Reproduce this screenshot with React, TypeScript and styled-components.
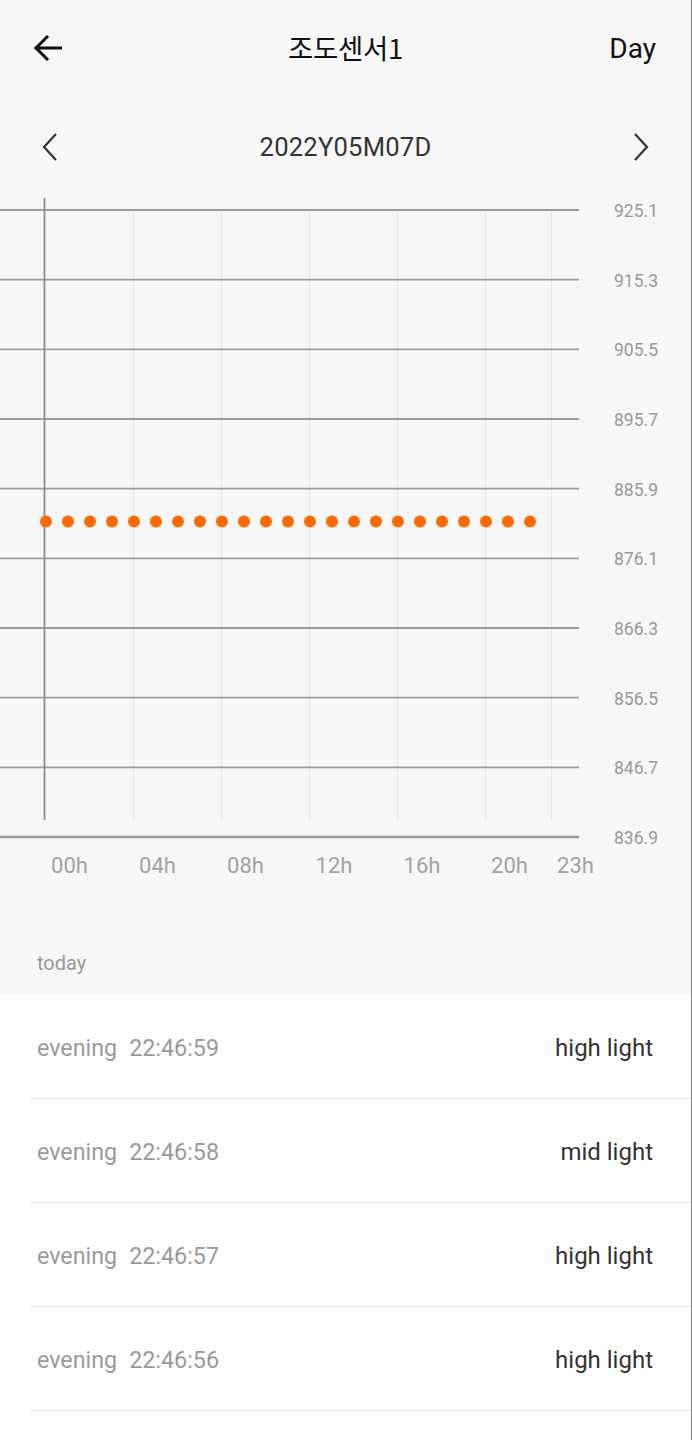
import React from "react";
import styled, { createGlobalStyle } from "styled-components";

const GlobalStyle = createGlobalStyle`
  html, body {
    margin: 0;
    padding: 0;
    background: #f7f7f7;
  }
  * { box-sizing: border-box; }
  body {
    font-family: Roboto, "Noto Sans CJK KR", "Noto Sans", sans-serif;
  }
`;

const Page = styled.div`
  width: 692px;
  min-height: 1440px;
  background: #ffffff;
  border-right: 1px solid #7a7a7a;
  display: flex;
  flex-direction: column;
`;

const Top = styled.div`
  background: #f7f7f7;
  display: flex;
  flex-direction: column;
`;

const Header = styled.header`
  height: 96px;
  display: grid;
  grid-template-columns: 1fr auto 1fr;
  align-items: center;
  padding: 0 34px 0 34px;
`;

const IconButton = styled.button<{ $align?: "start" | "end" }>`
  border: 0;
  background: transparent;
  padding: 0;
  display: flex;
  align-items: center;
  justify-self: ${(p) => (p.$align === "end" ? "end" : "start")};
  color: #222;
  cursor: pointer;
`;

const Title = styled.h1`
  margin: 0 0 2px;
  font-size: 27.5px;
  font-weight: 400;
  color: #111;
  font-family: "Noto Sans CJK KR", Roboto, sans-serif;
  letter-spacing: -0.3px;
`;

const RangeLabel = styled.span`
  justify-self: end;
  font-size: 28px;
  color: #111;
  margin-right: 1px;
`;

const DateBar = styled.div`
  height: 102px;
  display: grid;
  grid-template-columns: 1fr auto 1fr;
  align-items: center;
  padding: 0 42px 0 42px;
`;

const DateText = styled.span`
  font-size: 25.6px;
  color: #333;
  letter-spacing: 0.2px;
`;

const ChartWrap = styled.div`
  height: 712px;
  display: block;
`;

const SectionHead = styled.div`
  padding: 42px 37px 21px;
  font-size: 20px;
  line-height: 22px;
  color: #999;
`;

const List = styled.ul`
  list-style: none;
  margin: 0;
  padding: 0;
  background: #fff;
`;

const Row = styled.li`
  height: 104px;
  margin-left: 30px;
  padding: 0 38px 0 7px;
  display: flex;
  align-items: center;
  justify-content: space-between;
  border-bottom: 1px solid #e3e3e3;
  padding-top: 3px;
`;

const When = styled.span`
  font-size: 23.3px;
  color: #9a9a9a;
  display: flex;
  gap: 12px;
`;

const Level = styled.span`
  font-size: 24px;
  color: #333;
`;

const BackArrow = () => (
  <svg width="28" height="26" viewBox="0 0 28 26" fill="none">
    <path d="M2 13 H27 M13 2 L2 13 L13 24" stroke="#111" strokeWidth="3" strokeLinecap="square" strokeLinejoin="miter" />
  </svg>
);

const Chevron = ({ dir }: { dir: "left" | "right" }) => (
  <svg width="16" height="28" viewBox="0 0 16 28" fill="none">
    {dir === "left" ? (
      <path d="M14 1 L2 14 L14 27" stroke="#333" strokeWidth="2.2" />
    ) : (
      <path d="M2 1 L14 14 L2 27" stroke="#333" strokeWidth="2.2" />
    )}
  </svg>
);

const yValues = ["925.1", "915.3", "905.5", "895.7", "885.9", "876.1", "866.3", "856.5", "846.7", "836.9"];
const xVerticals = [133, 221, 309, 397, 485, 551];
const xLabels: [string, number][] = [
  ["00h", 69.5],
  ["04h", 157.5],
  ["08h", 245.5],
  ["12h", 334],
  ["16h", 422],
  ["20h", 509.5],
  ["23h", 575.5],
];

const Chart = () => {
  const step = 627 / 9;
  return (
    <svg width="692" height="712" viewBox="0 0 692 712" style={{ display: "block" }}>
      {xVerticals.map((x) => (
        <line key={x} x1={x + 0.5} x2={x + 0.5} y1={12} y2={622} stroke="#e6e6e6" strokeWidth="1" />
      ))}
      {yValues.map((v, i) => {
        const y = 12 + i * step;
        return (
          <g key={v}>
            <line x1={0} x2={579} y1={y} y2={y} stroke="#9c9c9c" strokeWidth={i === 9 ? 2.4 : 1.8} />
            <text
              x={658}
              y={y + 1}
              textAnchor="end"
              dominantBaseline="central"
              fontSize="17.5"
              fill="#9a9a9a"
              fontFamily="Roboto, sans-serif"
            >
              {v}
            </text>
          </g>
        );
      })}
      <line x1={44.5} x2={44.5} y1={0} y2={622} stroke="#8c8c8c" strokeWidth="1.8" />
      {Array.from({ length: 23 }, (_, i) => (
        <circle key={i} cx={46 + i * 22} cy={323.5} r={6} fill="#ff6a00" />
      ))}
      {xLabels.map(([t, x]) => (
        <text
          key={t}
          x={x}
          y={667}
          textAnchor="middle"
          dominantBaseline="central"
          fontSize="22"
          fill="#a3a3a3"
          fontFamily="Roboto, sans-serif"
        >
          {t}
        </text>
      ))}
    </svg>
  );
};

const records = [
  { time: "22:46:59", level: "high light" },
  { time: "22:46:58", level: "mid light" },
  { time: "22:46:57", level: "high light" },
  { time: "22:46:56", level: "high light" },
];

export default function App() {
  return (
    <>
      <GlobalStyle />
      <Page>
        <Top>
          <Header>
            <IconButton aria-label="back">
              <BackArrow />
            </IconButton>
            <Title>조도센서1</Title>
            <RangeLabel>Day</RangeLabel>
          </Header>
          <DateBar>
            <IconButton aria-label="previous day">
              <Chevron dir="left" />
            </IconButton>
            <DateText>2022Y05M07D</DateText>
            <IconButton aria-label="next day" $align="end">
              <Chevron dir="right" />
            </IconButton>
          </DateBar>
          <ChartWrap>
            <Chart />
          </ChartWrap>
          <SectionHead>today</SectionHead>
        </Top>
        <List>
          {records.map((r) => (
            <Row key={r.time}>
              <When>
                <span>evening</span>
                <span>{r.time}</span>
              </When>
              <Level>{r.level}</Level>
            </Row>
          ))}
        </List>
      </Page>
    </>
  );
}
